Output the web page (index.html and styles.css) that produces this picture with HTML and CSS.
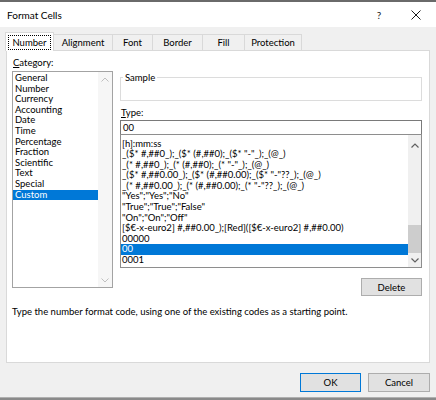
FILE: index.html
```html
<!DOCTYPE html>
<html lang="en">
<head>
<meta charset="utf-8">
<title>Format Cells</title>
<link rel="stylesheet" href="styles.css">
</head>
<body>
<div class="window">
  <div class="strip-top"></div>
  <div class="titlebar">
    <span class="title">Format Cells</span>
    <span class="tb-help">?</span>
    <span class="tb-close"><svg width="10" height="10" viewBox="0 0 10 10"><path d="M0.5 0.5 L9.5 9.5 M9.5 0.5 L0.5 9.5" stroke="#1a1a1a" stroke-width="1" fill="none"/></svg></span>
  </div>
  <div class="dialog">
    <div class="tabs">
      <div class="tab active w-number"><span class="focus">Number</span></div>
      <div class="tab w-align">Alignment</div>
      <div class="tab w-font">Font</div>
      <div class="tab w-border">Border</div>
      <div class="tab w-fill">Fill</div>
      <div class="tab w-prot">Protection</div>
    </div>
    <div class="panel">
      <div class="cols">
        <div class="left">
          <div class="label"><u>C</u>ategory:</div>
          <div class="listbox cat">
            <ul class="items">
              <li>General</li>
              <li>Number</li>
              <li>Currency</li>
              <li>Accounting</li>
              <li>Date</li>
              <li>Time</li>
              <li>Percentage</li>
              <li>Fraction</li>
              <li>Scientific</li>
              <li>Text</li>
              <li>Special</li>
              <li class="sel">Custom</li>
            </ul>
            <div class="vscroll disabled">
              <div class="sb-btn up"><svg width="8" height="5" viewBox="0 0 8 5"><polyline points="0.5,4.5 4,1 7.5,4.5" fill="none" stroke="currentColor" stroke-width="1"/></svg></div>
              <div class="track"></div>
              <div class="sb-btn down"><svg width="8" height="5" viewBox="0 0 8 5"><polyline points="0.5,0.5 4,4 7.5,0.5" fill="none" stroke="currentColor" stroke-width="1"/></svg></div>
            </div>
          </div>
        </div>
        <div class="right">
          <div class="sample"><span class="legend">Sample</span></div>
          <div class="label type-label"><u>T</u>ype:</div>
          <div class="input">00</div>
          <div class="listbox codes">
            <ul class="items">
              <li>[h]:mm:ss</li>
              <li>_($* #,##0_);_($* (#,##0);_($* "-"_);_(@_)</li>
              <li>_(* #,##0_);_(* (#,##0);_(* "-"_);_(@_)</li>
              <li>_($* #,##0.00_);_($* (#,##0.00);_($* "-"??_);_(@_)</li>
              <li>_(* #,##0.00_);_(* (#,##0.00);_(* "-"??_);_(@_)</li>
              <li>"Yes";"Yes";"No"</li>
              <li>"True";"True";"False"</li>
              <li>"On";"On";"Off"</li>
              <li>[$€-x-euro2] #,##0.00_);[Red]([$€-x-euro2] #,##0.00)</li>
              <li>00000</li>
              <li class="sel">00</li>
              <li>0001</li>
            </ul>
            <div class="vscroll">
              <div class="sb-btn up tall"><svg width="8" height="5" viewBox="0 0 8 5"><polyline points="0.5,4.5 4,1 7.5,4.5" fill="none" stroke="currentColor" stroke-width="1.2"/></svg></div>
              <div class="track"><div class="thumb"></div></div>
              <div class="sb-btn down"><svg width="8" height="5" viewBox="0 0 8 5"><polyline points="0.5,0.5 4,4 7.5,0.5" fill="none" stroke="currentColor" stroke-width="1.2"/></svg></div>
            </div>
          </div>
          <div class="btn-row"><button class="btn">Delete</button></div>
        </div>
      </div>
      <p class="help">Type the number format code, using one of the existing codes as a starting point.</p>
    </div>
    <div class="footer">
      <button class="btn default">OK</button>
      <button class="btn cancel">Cancel</button>
    </div>
  </div>
  <div class="strip-bottom"></div>
</div>
</body>
</html>
```
FILE: styles.css
```css
* { box-sizing: border-box; }
html, body { margin: 0; padding: 0; }
body {
  width: 436px;
  height: 400px;
  overflow: hidden;
  font-family: Lato, "Open Sans", sans-serif;
  font-size: 9.5px;
  color: #000;
  background: #f0f0f0;
}
.window { display: flex; flex-direction: column; height: 400px; }
.strip-top { height: 2px; flex: none; background: #6a6a6a; }
.titlebar {
  height: 25px; flex: none; background: #fff;
  display: flex; align-items: center; padding-left: 7px; padding-right: 10px;
}
.title { flex: 1; font-size: 10px; }
.tb-help { width: 20px; text-align: center; font-size: 10px; margin-right: 17px; color: #1a1a1a; }
.tb-close { width: 20px; display: flex; justify-content: center; align-items: center; }
.dialog { flex: 1; display: flex; flex-direction: column; padding: 0 6px; background: #f0f0f0; }
.tabs { display: flex; align-items: flex-end; height: 18px; margin-top: 5px; margin-left: -1px; flex: none; }
.tab {
  height: 16px; border: 1px solid #d9d9d9; border-bottom: none; margin-right: -1px;
  display: flex; align-items: center; justify-content: center; background: #f0f0f0;
}
.tab.active { height: 19px; margin-bottom: -1px; background: #fff; position: relative; z-index: 1; }
.focus { outline: 1px dotted #000; padding: 1px 3px; line-height: 11px; }
.w-number { width: 49px; }
.w-align { width: 60px; }
.w-font { width: 41px; }
.w-border { width: 51px; }
.w-fill { width: 43px; }
.w-prot { width: 58px; }
.panel { height: 313px; flex: none; background: #fff; border: 1px solid #d9d9d9; }
.cols { display: grid; grid-template-columns: 101px 302px; column-gap: 7px; padding-left: 5px; align-items: start; }
.left, .right { display: flex; flex-direction: column; }
.label { height: 11px; line-height: 11px; }
.left .label { margin-top: 6px; padding-left: 1px; }
.listbox { display: flex; border: 1px solid #8e8e8e; background: #fff; }
.cat { margin-top: 3px; height: 217px; border-color: #a3a3a3; }
.items { list-style: none; margin: 0; padding: 1px 0 0 0; flex: 1; min-width: 0; overflow: hidden; }
.items li { height: 10.6px; line-height: 10.6px; padding-left: 2px; white-space: nowrap; }
.items li.sel { background: #0078d7; color: #fff; }
.vscroll { width: 14px; flex: none; display: flex; flex-direction: column; background: #f0f0f0; color: #606060; }
.vscroll.disabled { background: #f6f6f6; color: #bfbfbf; }
.sb-btn { height: 14px; flex: none; display: flex; align-items: center; justify-content: center; }
.sb-btn.tall { height: 21px; }
.track { flex: 1; display: flex; flex-direction: column; justify-content: flex-end; }
.thumb { height: 28px; background: #cdcdcd; }
.sample { margin-top: 26px; height: 24px; border: 1px solid #dcdcdc; position: relative; }
.legend { position: absolute; top: -6px; left: 2px; padding: 0 2px; line-height: 11px; background: #fff; }
.type-label { margin-top: 6px; padding-left: 1px; }
.input { margin-top: 2px; height: 15px; border: 1px solid #7a7a7a; line-height: 13px; padding-left: 2px; }
.codes { margin-top: -1px; height: 134px; }
.codes .items { padding-top: 3.5px; }
.codes .items li { padding-left: 1px; }
.codes .vscroll { width: 13px; }
.btn-row { margin-top: 10px; display: flex; justify-content: flex-end; }
.btn {
  font: inherit; color: #000; height: 18px; width: 61px; padding: 0;
  border: 1px solid #adadad; background: #e1e1e1;
}
.help { margin: 10px 0 0 5px; line-height: 11px; }
.footer { flex: 1; display: flex; justify-content: flex-end; align-items: flex-start; padding-top: 10px; gap: 7px; }
.footer .btn { height: 19px; }
.btn.default { border-color: #0078d7; }
.btn.cancel { width: 62px; }
.strip-bottom { height: 3px; flex: none; background: #8a8a8a; border-top: 1px solid #b0b0b0; }
```
